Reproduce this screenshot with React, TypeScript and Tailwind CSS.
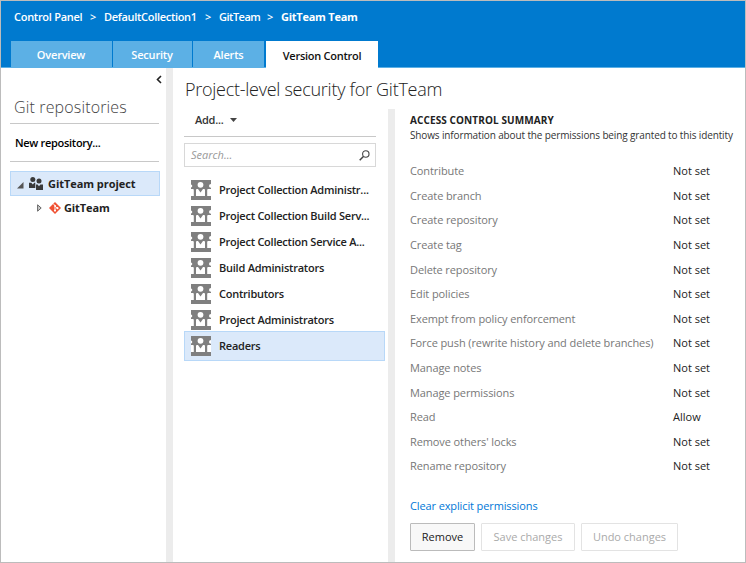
import React from "react";

const groups = [
  "Project Collection Administr...",
  "Project Collection Build Serv...",
  "Project Collection Service A...",
  "Build Administrators",
  "Contributors",
  "Project Administrators",
];

const permissions: [string, string][] = [
  ["Contribute", "Not set"],
  ["Create branch", "Not set"],
  ["Create repository", "Not set"],
  ["Create tag", "Not set"],
  ["Delete repository", "Not set"],
  ["Edit policies", "Not set"],
  ["Exempt from policy enforcement", "Not set"],
  ["Force push (rewrite history and delete branches)", "Not set"],
  ["Manage notes", "Not set"],
  ["Manage permissions", "Not set"],
  ["Read", "Allow"],
  ["Remove others' locks", "Not set"],
  ["Rename repository", "Not set"],
];

function GroupIcon() {
  return (
    <svg className="h-5 w-5 shrink-0" viewBox="0 0 20 20">
      <rect width="20" height="20" fill="#7f7f7f" />
      <g fill="#fff">
        <circle cx="9.500" cy="4.800" r="2.900" />
        <path d="M5 16V10q0-1 1-1H7l2.500 3.500L12 9h1q1 0 1 1v6z" />
        <path d="M0 4.500q1.300.2 1.300 1.500T0 7.500zM0 9h1.800q1 0 1 1v6H0zM20 4q-2 .2-2 2t2 1.700zM20 9h-2.800q-1 0-1 1v6H20z" />
      </g>
    </svg>
  );
}

function TeamIcon() {
  return (
    <svg className="h-[14px] w-[14px] shrink-0" viewBox="0 0 14 14" fill="#3a3a3a">
      <circle cx="3.800" cy="2.500" r="2.500" />
      <path d="M0 5.700h2.300l1.500 1.900 1.500-1.900H6.300V11H0z" />
      <circle cx="10" cy="4" r="2.500" />
      <path d="M7 7.400h1.600L10 9.200l1.400-1.800H14V13H7z" />
    </svg>
  );
}

function GitIcon() {
  return (
    <svg className="h-3 w-3 shrink-0" viewBox="0 0 12 12">
      <path d="M6 0l6 6-6 6-6-6z" fill="#f05133" />
      <path d="M4.100 1.600L6 3.600v5M6 4l2.400 2.300" stroke="#fff" strokeWidth="0.900" fill="none" />
      <circle cx="6" cy="3.800" r="0.900" fill="#fff" />
      <circle cx="6" cy="8.600" r="1.100" fill="#fff" />
      <circle cx="8.400" cy="6.200" r="1.100" fill="#fff" />
    </svg>
  );
}

export default function App() {
  return (
    <div className="flex h-[563px] w-[746px] flex-col overflow-hidden border border-[#bcbcbc] bg-white font-['Open_Sans','Noto_Sans',sans-serif] text-[11px] leading-4 whitespace-nowrap text-[#222]">
      <header className="flex h-[67px] shrink-0 flex-col border-b border-[#5cb0e5] bg-[#007acf] text-white">
        <nav className="flex h-10 shrink-0 pt-2 pl-[13px] font-semibold">
          <span className="w-[76px] tracking-[-0.28px]">Control Panel</span>
          <span className="w-[14px]">&gt;</span>
          <span className="w-[101px] tracking-[-0.3px]">DefaultCollection1</span>
          <span className="w-[14px]">&gt;</span>
          <span className="w-[48px] tracking-[-0.5px]">GitTeam</span>
          <span className="w-[14px]">&gt;</span>
          <span className="font-bold tracking-[-0.25px]">GitTeam Team</span>
        </nav>
        <div className="flex h-[26px] shrink-0 gap-px pl-[10px] font-semibold">
          <div className="flex w-[101px] items-center justify-center bg-[#5cb0e5] pt-0.5 pr-px tracking-[-0.2px]">Overview</div>
          <div className="flex w-[79px] items-center justify-center bg-[#5cb0e5] pt-0.5 pr-px tracking-[-0.2px]">Security</div>
          <div className="flex w-[71px] items-center justify-center bg-[#5cb0e5] pt-0.5 tracking-[-0.2px]">Alerts</div>
          <div className="-mb-px ml-px flex w-[112px] items-center justify-center bg-white pt-0.5 tracking-[-0.27px] text-[#111]">Version Control</div>
        </div>
      </header>
      <main className="flex min-h-0 flex-1">
        <aside className="w-[165px] shrink-0">
          <div className="flex h-6 justify-end pt-[7px] pr-[4px]">
            <svg className="h-[9px] w-[6px]" viewBox="0 0 6 9">
              <path d="M5 1L1.500 4.500 5 8" fill="none" stroke="#222" strokeWidth="1.600" />
            </svg>
          </div>
          <div className="mr-[7px] ml-[9px]">
            <h2 className="h-[32px] border-b border-[#c8c8c8] pl-1 text-[16px] leading-[30px] font-light tracking-[0.15px] text-[#444]">Git repositories</h2>
            <div className="h-[38px] border-b border-[#c8c8c8] pl-[5px] leading-[38px] font-semibold tracking-[-0.3px] text-black">New repository...</div>
            <div className="mt-[9px] -mr-px flex h-[25px] items-center border border-[#b8d8f8] bg-[#dbe9fa] pl-[6px] font-bold tracking-[-0.05px]">
              <svg className="mt-1 h-[7px] w-[7px]" viewBox="0 0 7 7">
                <path d="M6.500 0v6.500H0z" fill="#555" />
              </svg>
              <span className="mr-[5px] ml-[5px]"><TeamIcon /></span>
              GitTeam project
            </div>
            <div className="flex h-6 items-center pl-[27px] font-bold tracking-[-0.1px]">
              <svg className="h-2 w-[5px]" viewBox="0 0 5 8">
                <path d="M.6.8v6.400L4.200 4z" fill="#ccc" stroke="#666" />
              </svg>
              <span className="mr-[3px] ml-[7px]"><GitIcon /></span>
              GitTeam
            </div>
          </div>
        </aside>
        <div className="w-[7px] shrink-0 bg-[#ececec]" />
        <div className="flex min-w-0 flex-1 flex-col">
          <h1 className="h-[41px] shrink-0 pl-3 text-[18px] leading-[42px] font-light tracking-[-0.27px] text-[#222]">Project-level security for GitTeam</h1>
          <div className="flex min-h-0 flex-1">
            <section className="w-[215px] shrink-0 pl-[11px]">
              <div className="flex h-7 w-[192px] items-center border-b border-[#c8c8c8] pb-1.5 pl-[11px] font-semibold tracking-[-0.25px] text-[#333]">
                Add...
                <svg className="ml-[6px] h-1 w-[7px]" viewBox="0 0 7 4"><path d="M0 0h7L3.500 4z" fill="#444" /></svg>
              </div>
              <div className="mt-[6px] flex h-6 w-[192px] items-center justify-between border border-[#d8d8d8] pr-[5px] pl-[6px] text-[#999] italic">
                Search...
                <svg className="h-[11px] w-[11px]" viewBox="0 0 11 11" fill="none" stroke="#444">
                  <circle cx="6.800" cy="4" r="3.200" strokeWidth="1.100" />
                  <path d="M4.400 6.500L.7 10.300" strokeWidth="1.500" />
                </svg>
              </div>
              <ul className="mt-[10px] font-semibold tracking-[-0.24px] text-[#222]">
                {groups.map((g) => (
                  <li key={g} className="flex h-[26px] items-center pl-[7px]">
                    <GroupIcon />
                    <span className="ml-[8px]">{g}</span>
                  </li>
                ))}
                <li className="-mt-0.5 flex h-[30px] w-[201px] items-center border border-[#b8d8f8] bg-[#dbe9fa] pl-[6px]">
                  <GroupIcon />
                  <span className="ml-[8px]">Readers</span>
                </li>
              </ul>
            </section>
            <div className="w-[7px] shrink-0 bg-[#ececec]" />
            <section className="min-w-0 flex-1 pl-[15px]">
              <h3 className="mt-[4px] h-[15px] text-[10px] leading-[15px] font-bold tracking-[0.1px]">ACCESS CONTROL SUMMARY</h3>
              <p className="h-[14px] text-[10px] leading-[14px] tracking-[-0.13px] text-[#333]">Shows information about the permissions being granted to this identity</p>
              <dl className="mt-[17px]">
                {permissions.map(([name, value]) => (
                  <div key={name} className="flex h-[24.6px] items-center">
                    <dt className="w-[263px] tracking-[-0.1px] text-[#777]">{name}</dt>
                    <dd>{value}</dd>
                  </div>
                ))}
              </dl>
              <a className="mt-[19px] block tracking-[-0.12px] text-[#0078d7]">Clear explicit permissions</a>
              <div className="mt-[9px] flex h-7 gap-[6px]">
                <button className="w-[65px] rounded-[1px] border border-[#bbb] bg-[#f8f8f8] pt-px">Remove</button>
                <button className="w-[94px] rounded-[1px] border border-[#e3e3e3] pt-px text-[#aaa]">Save changes</button>
                <button className="w-[97px] rounded-[1px] border border-[#e3e3e3] pt-px text-[#aaa]">Undo changes</button>
              </div>
            </section>
          </div>
        </div>
      </main>
    </div>
  );
}
